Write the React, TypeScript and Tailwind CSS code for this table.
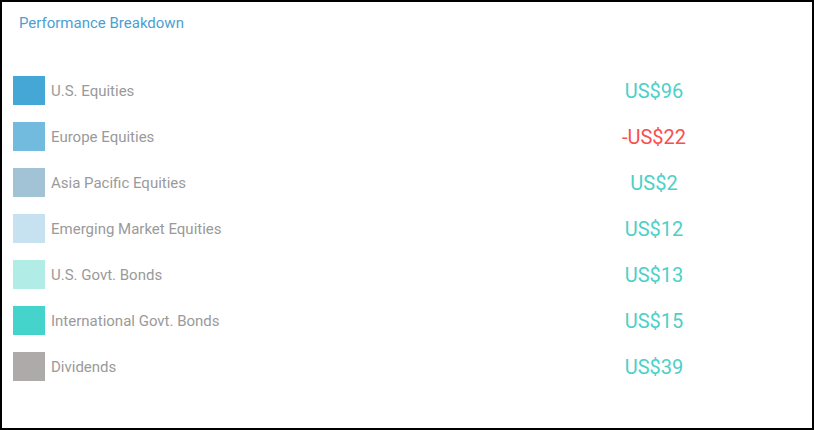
const rows = [
  { label: "U.S. Equities", color: "bg-[#45a7d5]", value: "US$96", neg: false },
  { label: "Europe Equities", color: "bg-[#73badf]", value: "-US$22", neg: true },
  { label: "Asia Pacific Equities", color: "bg-[#a2c3d6]", value: "US$2", neg: false },
  { label: "Emerging Market Equities", color: "bg-[#c6e2f0]", value: "US$12", neg: false },
  { label: "U.S. Govt. Bonds", color: "bg-[#b1ece7]", value: "US$13", neg: false },
  { label: "International Govt. Bonds", color: "bg-[#45d4cc]", value: "US$15", neg: false },
  { label: "Dividends", color: "bg-[#aeaaaa]", value: "US$39", neg: false },
];

export default function App() {
  return (
    <div className="h-[430px] w-[814px] border-2 border-black bg-white font-['Roboto',sans-serif]">
      <div className="px-[17px] pt-[11px] text-[15px] leading-[20px] text-[#4a9fd2]">
        Performance Breakdown
      </div>
      <div className="mt-[43px] flex flex-col gap-[17px] pl-[11px]">
        {rows.map((r) => (
          <div key={r.label} className="flex h-[29px] items-center">
            <div className={`h-[29px] w-[32px] shrink-0 ${r.color}`} />
            <div className="ml-[6px] flex-1 text-[15px] leading-[20px] text-[#9a9a9a]">{r.label}</div>
            <div
              className={`w-[316px] text-center text-[20px] ${
                r.neg ? "text-[#f8504f]" : "text-[#4dd0c8]"
              }`}
            >
              {r.value}
            </div>
          </div>
        ))}
      </div>
    </div>
  );
}
